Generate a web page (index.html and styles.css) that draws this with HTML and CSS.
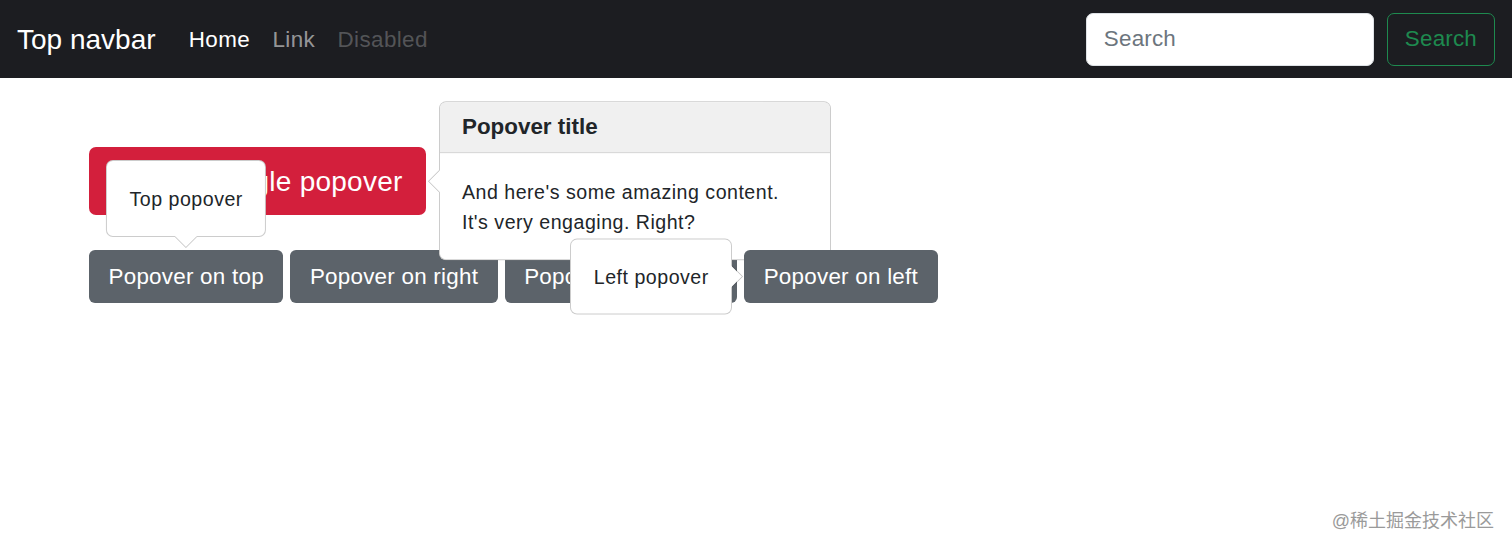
FILE: index.html
```html
<!DOCTYPE html>
<html lang="en">
<head>
  <meta charset="UTF-8" />
  <meta name="viewport" content="width=device-width, initial-scale=1.0"/>
  <title>Popovers</title>
  <link rel="stylesheet" href="styles.css">
</head>
<body>

  <nav class="navbar">
    <div class="nav-left">
      <a class="brand" href="#">Top navbar</a>
      <ul class="nav-links">
        <li><a class="active" href="#">Home</a></li>
        <li><a href="#">Link</a></li>
        <li><a class="disabled">Disabled</a></li>
      </ul>
    </div>
    <form class="search-form">
      <input class="search-input" type="search" placeholder="Search">
      <button class="search-btn" type="button">Search</button>
    </form>
  </nav>

  <main class="content">
    <div class="pop-wrap">
      <button class="btn btn-danger">Click to toggle popover</button>
      <div class="popover popover-right wide">
        <h3 class="popover-header">Popover title</h3>
        <div class="popover-body">And here's some amazing content.<br>It's very engaging. Right?</div>
      </div>
    </div>

    <div class="btn-row">
      <span class="pop-wrap">
        <button class="btn btn-secondary">Popover on top</button>
        <div class="popover popover-top">
          <div class="popover-body">Top popover</div>
        </div>
      </span>
      <button class="btn btn-secondary">Popover on right</button>
      <button class="btn btn-secondary">Popover on bottom</button>
      <span class="pop-wrap">
        <button class="btn btn-secondary">Popover on left</button>
        <div class="popover popover-left">
          <div class="popover-body">Left popover</div>
        </div>
      </span>
    </div>
  </main>

  <div class="watermark">@稀土掘金技术社区</div>

</body>
</html>
```

FILE: styles.css
```css
html, body {
  margin: 0;
  padding: 0;
  height: 548px;
  overflow: hidden;
  font-family: 'Liberation Sans', Arial, sans-serif;
  background-color: #fff;
  color: #212529;
}

/* navbar */
.navbar {
  height: 78px;
  background-color: #1c1d21;
  display: flex;
  justify-content: space-between;
  align-items: center;
  padding: 0 17px;
  box-sizing: border-box;
}

.nav-left {
  display: flex;
  align-items: center;
  padding-top: 2px;
}

.brand {
  color: #fff;
  font-size: 28px;
  text-decoration: none;
  margin-right: 22px;
}

.nav-links {
  list-style: none;
  display: flex;
  margin: 0;
  padding: 0;
}

.nav-links a {
  display: block;
  padding: 0 11.2px;
  font-size: 22.4px;
  letter-spacing: 0.4px;
  color: rgba(255, 255, 255, 0.55);
  text-decoration: none;
}

.nav-links a.active {
  color: #fff;
}

.nav-links a.disabled {
  color: rgba(255, 255, 255, 0.25);
}

.search-form {
  display: flex;
  gap: 13px;
}

.search-input {
  width: 288px;
  height: 53px;
  box-sizing: border-box;
  padding: 8px 17px;
  font-family: inherit;
  font-size: 22.4px;
  letter-spacing: 0.2px;
  color: #212529;
  background: #fff;
  border: 1px solid #dee2e6;
  border-radius: 7px;
  outline: none;
}

.search-input::placeholder {
  color: #6c757d;
}

.search-btn {
  height: 53px;
  padding: 0 17px;
  font-family: inherit;
  font-size: 22.4px;
  letter-spacing: 0.2px;
  color: #1e8a4f;
  background: transparent;
  border: 1px solid #1e8a4f;
  border-radius: 7px;
}

/* buttons */
.content {
  padding: 69px 89px;
  display: flex;
  flex-direction: column;
  align-items: flex-start;
  gap: 35px;
}

.btn {
  font-family: inherit;
  font-size: 22.4px;
  line-height: 1.5;
  letter-spacing: 0.25px;
  padding: 9px 18.5px 8.4px;
  border: 1px solid transparent;
  border-radius: 6px;
  color: #fff;
  cursor: pointer;
  white-space: nowrap;
}

.btn-danger {
  background-color: #d31f3c;
  font-size: 28px;
  padding: 12.5px 22px 11.5px;
  border-radius: 7px;
}

.btn-secondary {
  background-color: #5c636a;
}

.btn-row {
  display: flex;
  gap: 7px;
}

.pop-wrap {
  position: relative;
  display: inline-block;
}

/* popovers */
.popover {
  position: absolute;
  background: #fff;
  border: 1px solid rgba(0, 0, 0, 0.2);
  border-radius: 7px;
  font-size: 19.6px;
  line-height: 30px;
  letter-spacing: 0.5px;
  color: #212529;
  white-space: nowrap;
}

.popover::before,
.popover::after {
  content: "";
  position: absolute;
  border: 11px solid transparent;
}

.popover-header {
  margin: 0;
  padding: 12px 22.4px 11.5px;
  font-size: 22.4px;
  font-weight: 700;
  line-height: 1.2;
  letter-spacing: 0;
  background-color: #f0f0f0;
  border-bottom: 1px solid rgba(0, 0, 0, 0.2);
  border-radius: 6px 6px 0 0;
}

.popover-body {
  padding: 22.4px;
}

.wide {
  width: 392px;
  box-sizing: border-box;
}

.wide .popover-body {
  padding-top: 23.5px;
}

.popover-right {
  left: calc(100% + 13px);
  top: 50%;
  transform: translateY(-50%);
}

.popover-right::before,
.popover-right::after {
  top: 50%;
  margin-top: -11px;
  border-left: 0;
}

.popover-right::before {
  right: calc(100% + 1px);
  border-right-color: rgba(0, 0, 0, 0.25);
}

.popover-right::after {
  right: 100%;
  border-right-color: #fff;
}

.popover-top {
  bottom: calc(100% + 13px);
  left: 50%;
  transform: translateX(-50%);
}

.popover-top::before,
.popover-top::after {
  left: 50%;
  margin-left: -11px;
  border-bottom: 0;
}

.popover-top::before {
  top: calc(100% + 1px);
  border-top-color: rgba(0, 0, 0, 0.25);
}

.popover-top::after {
  top: 100%;
  border-top-color: #fff;
}

.popover-left {
  right: calc(100% + 12px);
  top: 50%;
  transform: translateY(-50%);
}

.popover-left::before,
.popover-left::after {
  top: 50%;
  margin-top: -11px;
  border-right: 0;
}

.popover-left::before {
  left: calc(100% + 1px);
  border-left-color: rgba(0, 0, 0, 0.25);
}

.popover-left::after {
  left: 100%;
  border-left-color: #fff;
}

.watermark {
  position: absolute;
  right: 18px;
  bottom: 16px;
  font-family: 'Liberation Sans', 'Noto Sans CJK SC', sans-serif;
  font-size: 18px;
  color: #9a9a9a;
}
```
